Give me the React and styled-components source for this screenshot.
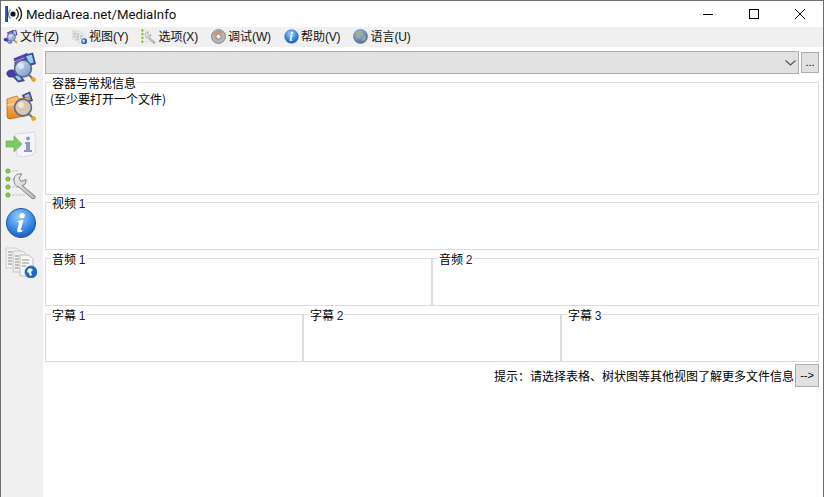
import React from "react";
import styled, { createGlobalStyle } from "styled-components";

const GlobalStyle = createGlobalStyle`
  html, body {
    margin: 0;
    padding: 0;
    background: #fff;
  }
  body {
    font-family: "Noto Sans CJK SC", "Liberation Sans", sans-serif;
    font-size: 12px;
    color: #000;
    overflow: hidden;
  }
`;

const LATIN = `"Liberation Sans", "Noto Sans CJK SC", sans-serif`;

// ---- icons ----
const Defs = () => (
  <svg width="0" height="0" style={{ position: "absolute" }}>
    <defs>
      <radialGradient id="ball" cx="45%" cy="30%" r="75%">
        <stop offset="0" stopColor="#9fd0fb" />
        <stop offset="0.55" stopColor="#3d8ee8" />
        <stop offset="1" stopColor="#1553b0" />
      </radialGradient>
      <radialGradient id="globe" cx="40%" cy="30%" r="75%">
        <stop offset="0" stopColor="#a9c4da" />
        <stop offset="1" stopColor="#3f6d96" />
      </radialGradient>
      <linearGradient id="folder" x1="0" y1="0" x2="0" y2="1">
        <stop offset="0" stopColor="#fbc67c" />
        <stop offset="1" stopColor="#e5831f" />
      </linearGradient>
      <linearGradient id="lens" x1="0" y1="0" x2="1" y2="1">
        <stop offset="0" stopColor="#dbe8f5" />
        <stop offset="1" stopColor="#6f93c7" />
      </linearGradient>
      <linearGradient id="wrench" x1="0" y1="0" x2="1" y2="1">
        <stop offset="0" stopColor="#f2f2f2" />
        <stop offset="1" stopColor="#b4b4b4" />
      </linearGradient>
    </defs>
  </svg>
);

const Lens = ({ tint = "url(#lens)" }) => (
  <g>
    <path d="M23 23 L28.5 28.5" stroke="#8a7a55" strokeWidth="2.4" strokeLinecap="round" />
    <circle cx="28.6" cy="28.6" r="2.4" fill="#eda12a" />
    <circle cx="18" cy="17.5" r="8.4" fill={tint} stroke="#5a6a8e" strokeWidth="1.6" />
    <circle cx="16" cy="15" r="3" fill="#fff" opacity="0.55" />
  </g>
);

const Film = () => (
  <g>
    <path d="M19 4 L28 1.5 L31 13 L25 15 Z" fill="#3f4a86" />
    <path d="M21 5.2 L26.8 3.6 L28.6 11.5 L24.6 12.8 Z" fill="#93d0f0" />
    <path d="M7 25 L14 22 L20 30 L13 31.5 Z" fill="#3f4a86" />
    <path d="M10 25.6 L13.6 24 L16.6 28.8 L13.4 29.6 Z" fill="#93d0f0" />
  </g>
);

const NoteIcon = ({ size = 32 }) => (
  <svg width={size} height={size} viewBox="0 0 32 32">
    <path d="M9 9 L21 4 V8 L11 12 V22" fill="none" stroke="#5541b8" strokeWidth="3" />
    <ellipse cx="6.6" cy="22.6" rx="5.2" ry="4" fill="#4b38ad" />
    <Film />
    <Lens />
  </svg>
);

const FolderIcon = ({ size = 32 }) => (
  <svg width={size} height={size} viewBox="0 0 32 32">
    <path d="M17 5 L25 1.5 L28 11 L20 13 Z" fill="#3f4a86" />
    <path d="M19.4 5.6 L24 3.8 L25.8 9.6 L21 10.8 Z" fill="#93d0f0" />
    <path d="M2 9 L12 6 L14 9 L24 7 V25 L5 29 Q2 29 2 26 Z" fill="url(#folder)" stroke="#b9691a" strokeWidth="0.8" />
    <path d="M2.5 14 L24 10.5 V12.5 L2.5 16 Z" fill="#fde2b4" opacity="0.7" />
    <Lens tint="#d9c6b4" />
  </svg>
);

const SheetArrowIcon = ({ size = 32 }) => (
  <svg width={size} height={size} viewBox="0 0 32 32">
    <path d="M10 5 L30 3 Q32 15 30 24 Q24 29 12 27 Z" fill="#f4f5fb" stroke="#cfd2de" strokeWidth="0.8" />
    <circle cx="23" cy="9.5" r="1.9" fill="#8d97d0" />
    <path d="M20 13 H25 V21 H27 V23 H19 V21 H21 V15 H20 Z" fill="#8d97d0" />
    <path d="M1 12 H9 V7 L17 15 L9 23 V18 H1 Z" fill="#7bcb5f" stroke="#5fae48" strokeWidth="0.6" />
  </svg>
);

const WrenchIcon = ({ size = 32 }) => (
  <svg width={size} height={size} viewBox="0 0 32 32">
    {[3, 11, 19, 27].map((y) => (
      <g key={y}>
        <circle cx="3" cy={y} r="2.1" fill="#8ccc3a" stroke="#5e9a1e" strokeWidth="0.8" />
        <path d={`M7 ${y} H${y > 16 ? 20 : 13}`} stroke="#cfcfcf" strokeWidth="1.4" strokeDasharray="2.5 1" />
      </g>
    ))}
    <path
      d="M9 11 Q10 5 17 6 L14 10 L16 13.5 L21 11.5 Q21.5 17 17 17.5 L30 28 Q31 31.5 27 30.5 L14.5 19.5 Q8.5 18 9 11 Z"
      fill="url(#wrench)"
      stroke="#808080"
      strokeWidth="1"
    />
  </svg>
);

const InfoBallIcon = ({ size = 32 }) => (
  <svg width={size} height={size} viewBox="0 0 32 32">
    <circle cx="16" cy="16" r="14.6" fill="url(#ball)" stroke="#1a58ad" strokeWidth="1" />
    <circle cx="17.2" cy="8.6" r="2.6" fill="#fff" />
    <path d="M12.5 14.5 Q15 12.5 18.4 13 L15.8 22.5 Q15.6 24 18.6 22.8 Q16.5 26 13 25.2 Q11.6 24.6 12.4 22 L14 16 Q13.5 15 12.5 15.5 Z" fill="#fff" />
  </svg>
);

const PagesIcon = ({ size = 32 }) => (
  <svg width={size} height={size} viewBox="0 0 32 32">
    <path d="M1 2 H12 L15 5 V22 H1 Z" fill="#f2f2f2" stroke="#c4c4c4" strokeWidth="0.8" />
    <path d="M8 5 H18 L21 8 V26 H8 Z" fill="#efefef" stroke="#bcbcbc" strokeWidth="0.8" />
    <path d="M15 9 H24 L28 13 V30 H15 Z" fill="#f6f6f6" stroke="#b4b4b4" strokeWidth="0.8" />
    <path d="M3 6 H7 M3 9 H7 M3 12 H7 M3 15 H7 M3 18 H7 M10 10 H14 M10 13 H14 M10 16 H14 M10 19 H14 M10 22 H14 M17 14 H24 M17 17 H24 M17 20 H21" stroke="#8f8f8f" strokeWidth="1.2" />
    <circle cx="26" cy="26" r="6" fill="#1f6ec4" stroke="#144f96" strokeWidth="0.7" />
    <path d="M23 23 Q26 21 28 24 L26 26 L27 29 L25 30 L24 27 L22 26 Z" fill="#f2f6fb" />
  </svg>
);

const DiscIcon = ({ size = 15 }) => (
  <svg width={size} height={size} viewBox="0 0 15 15">
    <circle cx="7.5" cy="7.5" r="7" fill="#b4b4b4" stroke="#7b7b7b" strokeWidth="0.8" />
    <path d="M3 6 A5 5 0 0 1 11 4" fill="none" stroke="#e0835a" strokeWidth="1.4" />
    <circle cx="7.5" cy="7.5" r="2.6" fill="#eeeeee" stroke="#6d6d6d" strokeWidth="0.8" />
  </svg>
);

const GlobeIcon = ({ size = 15 }) => (
  <svg width={size} height={size} viewBox="0 0 15 15">
    <circle cx="7.5" cy="7.5" r="7" fill="url(#globe)" stroke="#5b7690" strokeWidth="0.6" />
    <path d="M3 4 Q6 1.5 9 3 L8 6 L5.5 7 L5.5 10 L3.5 8 Z" fill="#9eb287" />
    <path d="M9.5 7.5 L13 7 L12 11 L9.5 12.5 Z" fill="#a8ab7f" />
  </svg>
);

const menuItems = [
  { icon: NoteIcon, label: "文件", key: "(Z)" },
  { icon: PagesIcon, label: "视图", key: "(Y)" },
  { icon: WrenchIcon, label: "选项", key: "(X)" },
  { icon: DiscIcon, label: "调试", key: "(W)" },
  { icon: InfoBallIcon, label: "帮助", key: "(V)" },
  { icon: GlobeIcon, label: "语言", key: "(U)" },
];

const sideIcons = [NoteIcon, FolderIcon, SheetArrowIcon, WrenchIcon, InfoBallIcon, PagesIcon];

const App = () => (
  <Window>
    <GlobalStyle />
    <Defs />
    <TitleBar>
      <Logo width="20" height="18" viewBox="0 0 20 18">
        <rect x="0" y="1" width="1" height="16" fill="#1f8a3c" />
        <rect x="1" y="1" width="1" height="16" fill="#2a5bb8" />
        <rect x="2" y="1" width="1" height="16" fill="#0d5c34" />
        <circle cx="8" cy="9" r="2.6" fill="#111" />
        <path d="M5.5 4.5 A6 6 0 0 0 5.5 13.5" fill="none" stroke="#777" strokeWidth="1.1" />
        <path d="M11 4 A6.4 6.4 0 0 1 11 14" fill="none" stroke="#222" strokeWidth="1.3" />
        <path d="M13.5 2 A9.6 9.6 0 0 1 13.5 16" fill="none" stroke="#222" strokeWidth="1.3" />
      </Logo>
      <Title>MediaArea.net/MediaInfo</Title>
      <Controls>
        <Control>
          <svg width="10" height="10" viewBox="0 0 10 10">
            <path d="M0 5.5 H10" stroke="#000" strokeWidth="1" />
          </svg>
        </Control>
        <Control>
          <svg width="10" height="10" viewBox="0 0 10 10">
            <rect x="0.5" y="0.5" width="9" height="9" fill="none" stroke="#000" strokeWidth="1" />
          </svg>
        </Control>
        <Control>
          <svg width="10" height="10" viewBox="0 0 10 10">
            <path d="M0 0 L10 10 M10 0 L0 10" stroke="#000" strokeWidth="1" />
          </svg>
        </Control>
      </Controls>
    </TitleBar>

    <MenuBar>
      {menuItems.map(({ icon: Icon, label, key }) => (
        <MenuItem key={label}>
          <Icon size={15} />
          <span>
            {label}
            <Latin>{key}</Latin>
          </span>
        </MenuItem>
      ))}
    </MenuBar>

    <Body>
      <Sidebar>
        {sideIcons.map((Icon, i) => (
          <SideButton key={i}>
            <Icon />
          </SideButton>
        ))}
      </Sidebar>

      <Main>
        <FileRow>
          <Combo>
            <svg width="11" height="6" viewBox="0 0 11 6">
              <path d="M0.5 0.5 L5.5 5 L10.5 0.5" fill="none" stroke="#555" strokeWidth="1.2" />
            </svg>
          </Combo>
          <DotsButton>...</DotsButton>
        </FileRow>

        <Panels>
          <Group $height={113}>
            <Legend>容器与常规信息</Legend>
            <Message>(至少要打开一个文件)</Message>
          </Group>
          <Group $height={48}>
            <Legend>视频 <Num>1</Num></Legend>
          </Group>
          <GroupRow>
            <Group $height={48}>
              <Legend>音频 <Num>1</Num></Legend>
            </Group>
            <Group $height={48}>
              <Legend>音频 <Num>2</Num></Legend>
            </Group>
          </GroupRow>
          <GroupRow>
            <Group $height={48}>
              <Legend>字幕 <Num>1</Num></Legend>
            </Group>
            <Group $height={48}>
              <Legend>字幕 <Num>2</Num></Legend>
            </Group>
            <Group $height={48}>
              <Legend>字幕 <Num>3</Num></Legend>
            </Group>
          </GroupRow>
        </Panels>

        <HintRow>
          <span>提示：请选择表格、树状图等其他视图了解更多文件信息</span>
          <NextButton>--&gt;</NextButton>
        </HintRow>
      </Main>
    </Body>
  </Window>
);

export default App;

// ----------------------------
// Styled Components
// ----------------------------
const Window = styled.div`
  width: 824px;
  height: 497px;
  box-sizing: border-box;
  border: 1px solid #6e6e6e;
  border-bottom: none;
  display: flex;
  flex-direction: column;
  background: #fff;
  overflow: hidden;
`;

const TitleBar = styled.div`
  height: 26px;
  display: flex;
  align-items: center;
  padding-left: 4px;
  flex: none;
`;

const Logo = styled.svg`
  flex: none;
`;

const Title = styled.div`
  margin-left: 1px;
  font-family: Roboto, "Liberation Sans", sans-serif;
  font-size: 13.2px;
  color: #111;
  white-space: nowrap;
`;

const Controls = styled.div`
  margin-left: auto;
  display: flex;
  height: 100%;
`;

const Control = styled.div`
  width: 46px;
  display: flex;
  align-items: center;
  justify-content: center;
`;

const MenuBar = styled.div`
  height: 20px;
  box-sizing: border-box;
  flex: none;
  display: flex;
  align-items: center;
  gap: 13px;
  padding: 0 0 2px 2px;
  background: #f0f0f0;
`;

const MenuItem = styled.div`
  display: flex;
  align-items: center;
  gap: 2px;
  white-space: nowrap;
  color: #111;
  line-height: 16px;
`;

const Latin = styled.span`
  font-family: ${LATIN};
  letter-spacing: -0.15px;
`;

const Body = styled.div`
  flex: 1;
  display: flex;
  min-height: 0;
`;

const Sidebar = styled.div`
  width: 42px;
  flex: none;
  background: #f0f0f0;
  display: flex;
  flex-direction: column;
  align-items: center;
  gap: 7px;
  padding: 4px 2px 0 0;
  box-sizing: border-box;
`;

const SideButton = styled.div`
  width: 32px;
  height: 32px;
  filter: blur(0.3px);
`;

const Main = styled.div`
  flex: 1;
  min-width: 0;
  padding: 4px 4px 0 2px;
  display: flex;
  flex-direction: column;
`;

const FileRow = styled.div`
  display: flex;
  align-items: center;
  gap: 2px;
  height: 23px;
`;

const Combo = styled.div`
  flex: 1;
  height: 23px;
  box-sizing: border-box;
  background: #e1e1e1;
  border: 1px solid #adadad;
  display: flex;
  align-items: center;
  justify-content: flex-end;
  padding-right: 2px;
`;

const DotsButton = styled.div`
  width: 18px;
  height: 21px;
  box-sizing: border-box;
  background: #e1e1e1;
  border: 1px solid #adadad;
  font-family: ${LATIN};
  font-size: 11px;
  line-height: 18px;
  text-align: center;
`;

const Panels = styled.div`
  margin-top: 8px;
  display: flex;
  flex-direction: column;
  gap: 7px;
`;

const GroupRow = styled.div`
  display: flex;
  margin-top: 1px;

  & > * {
    flex: 1 1 0;
    min-width: 0;
  }
`;

const Group = styled.div`
  position: relative;
  height: ${(p) => p.$height}px;
  box-sizing: border-box;
  border: 1px solid #dcdcdc;
`;

const Legend = styled.div`
  position: absolute;
  top: -8px;
  left: 5px;
  padding: 0 1px;
  background: #fff;
  line-height: 16px;
  white-space: nowrap;
`;

const Num = styled.span`
  font-family: ${LATIN};
  color: #1c1464;
`;

const Message = styled.div`
  padding: 8px 0 0 4px;
  line-height: 16px;
`;

const HintRow = styled.div`
  margin-top: 2px;
  display: flex;
  align-items: center;
  justify-content: flex-end;
  gap: 1px;
`;

const NextButton = styled.div`
  width: 24px;
  height: 23px;
  box-sizing: border-box;
  background: #e1e1e1;
  border: 1px solid #adadad;
  font-family: ${LATIN};
  font-size: 11px;
  line-height: 20px;
  text-align: center;
`;
